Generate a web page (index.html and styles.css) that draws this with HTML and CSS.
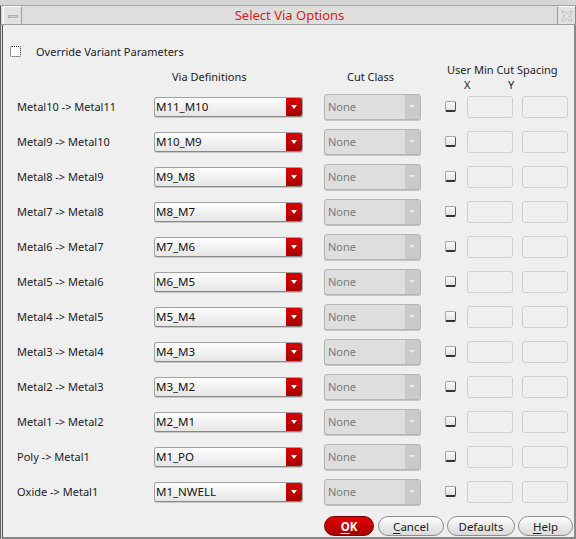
FILE: index.html
```html
<!DOCTYPE html>
<html>
<head>
<meta charset="utf-8">
<link rel="stylesheet" href="styles.css">
</head>
<body>
<div class="window">
  <div class="topstrip"></div>
  <div class="titlebar">
    <div class="tb-btn tb-min"><span class="dash"></span></div>
    <div class="title">Select Via Options</div>
    <div class="tb-btn tb-close">
      <svg width="14" height="14" viewBox="0 0 14 14">
        <path d="M2 2 Q5 2 7 5 Q9 2 12 2 Q12 5 9 7 Q12 9 12 12 Q9 12 7 9 Q5 12 2 12 Q2 9 5 7 Q2 5 2 2 Z" fill="none" stroke="#9a9a9a" stroke-width="1" stroke-dasharray="1 1"/>
      </svg>
    </div>
  </div>
  <div class="content">
    <div class="override">
      <span class="chk focus"></span>
      <span class="override-label">Override Variant Parameters</span>
    </div>
    <div class="grid head">
      <div></div>
      <div class="h-via">Via Definitions</div>
      <div class="h-cut">Cut Class</div>
      <div class="h-spacing">
        <div class="h-user">User Min Cut Spacing</div>
        <div class="h-xy"><span class="h-x">X</span><span class="h-y">Y</span></div>
      </div>
    </div>
    <div class="grid rows">
      <div class="lbl">Metal10 -&gt; Metal11</div>
      <div class="combo"><span class="val">M11_M10</span><span class="arrow"></span></div>
      <div class="ccombo"><span class="val">None</span><span class="carrow"></span></div>
      <span class="chk"></span><span class="field"></span><span class="field"></span>

      <div class="lbl">Metal9 -&gt; Metal10</div>
      <div class="combo"><span class="val">M10_M9</span><span class="arrow"></span></div>
      <div class="ccombo"><span class="val">None</span><span class="carrow"></span></div>
      <span class="chk"></span><span class="field"></span><span class="field"></span>

      <div class="lbl">Metal8 -&gt; Metal9</div>
      <div class="combo"><span class="val">M9_M8</span><span class="arrow"></span></div>
      <div class="ccombo"><span class="val">None</span><span class="carrow"></span></div>
      <span class="chk"></span><span class="field"></span><span class="field"></span>

      <div class="lbl">Metal7 -&gt; Metal8</div>
      <div class="combo"><span class="val">M8_M7</span><span class="arrow"></span></div>
      <div class="ccombo"><span class="val">None</span><span class="carrow"></span></div>
      <span class="chk"></span><span class="field"></span><span class="field"></span>

      <div class="lbl">Metal6 -&gt; Metal7</div>
      <div class="combo"><span class="val">M7_M6</span><span class="arrow"></span></div>
      <div class="ccombo"><span class="val">None</span><span class="carrow"></span></div>
      <span class="chk"></span><span class="field"></span><span class="field"></span>

      <div class="lbl">Metal5 -&gt; Metal6</div>
      <div class="combo"><span class="val">M6_M5</span><span class="arrow"></span></div>
      <div class="ccombo"><span class="val">None</span><span class="carrow"></span></div>
      <span class="chk"></span><span class="field"></span><span class="field"></span>

      <div class="lbl">Metal4 -&gt; Metal5</div>
      <div class="combo"><span class="val">M5_M4</span><span class="arrow"></span></div>
      <div class="ccombo"><span class="val">None</span><span class="carrow"></span></div>
      <span class="chk"></span><span class="field"></span><span class="field"></span>

      <div class="lbl">Metal3 -&gt; Metal4</div>
      <div class="combo"><span class="val">M4_M3</span><span class="arrow"></span></div>
      <div class="ccombo"><span class="val">None</span><span class="carrow"></span></div>
      <span class="chk"></span><span class="field"></span><span class="field"></span>

      <div class="lbl">Metal2 -&gt; Metal3</div>
      <div class="combo"><span class="val">M3_M2</span><span class="arrow"></span></div>
      <div class="ccombo"><span class="val">None</span><span class="carrow"></span></div>
      <span class="chk"></span><span class="field"></span><span class="field"></span>

      <div class="lbl">Metal1 -&gt; Metal2</div>
      <div class="combo"><span class="val">M2_M1</span><span class="arrow"></span></div>
      <div class="ccombo"><span class="val">None</span><span class="carrow"></span></div>
      <span class="chk"></span><span class="field"></span><span class="field"></span>

      <div class="lbl">Poly -&gt; Metal1</div>
      <div class="combo"><span class="val">M1_PO</span><span class="arrow"></span></div>
      <div class="ccombo"><span class="val">None</span><span class="carrow"></span></div>
      <span class="chk"></span><span class="field"></span><span class="field"></span>

      <div class="lbl">Oxide -&gt; Metal1</div>
      <div class="combo"><span class="val">M1_NWELL</span><span class="arrow"></span></div>
      <div class="ccombo"><span class="val">None</span><span class="carrow"></span></div>
      <span class="chk"></span><span class="field"></span><span class="field"></span>
    </div>
    <div class="buttons">
      <button class="btn ok"><u>O</u>K</button>
      <button class="btn cancel"><u>C</u>ancel</button>
      <button class="btn defaults">Defaults</button>
      <button class="btn help"><u>H</u>elp</button>
    </div>
  </div>
</div>
</body>
</html>
```

FILE: styles.css
```css
* { box-sizing: border-box; }
html, body { margin: 0; padding: 0; }
body {
  width: 576px;
  height: 539px;
  background: #d8d8d8;
  font-family: "Noto Sans", "DejaVu Sans", sans-serif;
  font-size: 11px;
  color: #222;
  overflow: hidden;
}
.window {
  width: 576px;
  height: 539px;
  display: flex;
  flex-direction: column;
}
.topstrip {
  height: 6px;
  background: #d6d6d6;
  border-bottom: 1px solid #a4a4a4;
  flex: none;
}
.titlebar {
  height: 19px;
  flex: none;
  display: flex;
  align-items: stretch;
  background: #dedede;
  border-bottom: 1px solid #9c9c9c;
  border-left: 1px solid #555;
  border-right: 1px solid #888;
}
.tb-btn {
  width: 19px;
  flex: none;
  display: flex;
  align-items: center;
  justify-content: center;
  background: #e2e2e2;
  border-top: 1px solid #fff;
  border-left: 1px solid #fff;
}
.tb-min { margin-left: 2px; border-right: 1px solid #999; }
.tb-close { border-left: 1px solid #999; width: 18px; }
.dash {
  width: 10px;
  height: 3px;
  background: #d0d0d0;
  border: 1px solid #b0b0b0;
  margin-top: 1px;
}
.title {
  flex: 1;
  text-align: center;
  color: #d41c1c;
  font-size: 13px;
  line-height: 18px;
}
.content {
  flex: 1;
  background: #efefef;
  border-left: 1px solid #555;
  margin-left: 2px;
  box-shadow: -1px 0 0 #dcdcdc, -2px 0 0 #666;
  border-right: 2px solid #8a8a8a;
  border-bottom: 2px solid #8a8a8a;
  padding-top: 16px;
  padding-left: 7px;
  display: flex;
  flex-direction: column;
}
.override {
  height: 20px;
  display: flex;
  align-items: center;
}
.override-label { margin-left: 15px; }
.chk {
  width: 11px;
  height: 11px;
  display: inline-block;
  border: 1px solid #a8a8a8;
  border-right-color: #555;
  border-bottom: 2px solid #333;
  border-radius: 2px;
  background: linear-gradient(#fbfbfb, #e2e2e2);
}
.chk.focus {
  border: 1px dotted #222;
  background: #fafafa;
  margin-top: 1px;
}
.grid {
  display: grid;
  grid-template-columns: 137px 170px 121px 22px 55px 46px;
  padding-left: 7px;
}
.head {
  height: 28px;
}
.h-via { padding-left: 18px; padding-top: 8px; line-height: 15px; }
.h-cut { padding-left: 23px; padding-top: 8px; line-height: 15px; }
.h-spacing { grid-column: 4 / span 3; padding-left: 2px; }
.h-user { line-height: 15px; padding-top: 1px; }
.h-xy { line-height: 14px; position: relative; height: 14px; margin-top: 1px; }
.h-x { position: absolute; left: 17px; }
.h-y { position: absolute; left: 61px; }
.rows {
  grid-auto-rows: 35px;
  align-items: center;
}
.lbl { white-space: nowrap; }
.combo {
  width: 149px;
  height: 20px;
  border: 1px solid #a2a2a2;
  border-bottom-color: #888;
  border-radius: 3px;
  background: linear-gradient(#fdfdfd, #e6e6e6);
  display: flex;
  align-items: center;
  overflow: hidden;
  box-shadow: 0 1px 0 #c8c8c8;
}
.combo .val { flex: 1; padding-left: 1px; color: #111; font-size: 11.5px; }
.arrow {
  width: 16px;
  height: 100%;
  background: linear-gradient(#d90000, #a80000);
  position: relative;
  flex: none;
}
.arrow::after {
  content: "";
  position: absolute;
  left: 5px;
  top: 7px;
  border-left: 3px solid transparent;
  border-right: 3px solid transparent;
  border-top: 4px solid #fff;
}
.ccombo {
  width: 97px;
  height: 26px;
  border: 1px solid #b4b4b4;
  border-radius: 3px;
  background: #dedede;
  display: flex;
  align-items: center;
  overflow: hidden;
  box-shadow: 0 1px 0 #c4c4c4;
}
.ccombo .val { flex: 1; padding-left: 3px; color: #7a7a7a; }
.carrow {
  width: 15px;
  height: 100%;
  background: #c9c9c9;
  position: relative;
  flex: none;
}
.carrow::after {
  content: "";
  position: absolute;
  left: 4px;
  top: 10px;
  border-left: 3px solid transparent;
  border-right: 3px solid transparent;
  border-top: 3px solid #ececec;
}
.field {
  width: 46px;
  height: 22px;
  border: 1px solid #cfcfcf;
  border-radius: 3px;
  background: #efefef;
  display: block;
}
.buttons {
  margin-top: 7px;
  display: flex;
  justify-content: flex-end;
  gap: 3px;
  padding-right: 1px;
}
.btn {
  font-family: "Noto Sans", "DejaVu Sans", sans-serif;
  font-size: 11.5px;
  height: 20px;
  padding: 0;
  border: 1px solid #8c8c8c;
  border-radius: 10px;
  background: linear-gradient(#fcfcfc, #dadada);
  color: #222;
  line-height: 17px;
}
.btn u { text-underline-offset: 2px; }
.ok {
  width: 50px;
  margin-right: 1px;
  background: linear-gradient(#e60000, #a40000);
  border-color: #7a0000;
  color: #fff;
  font-weight: bold;
}
.cancel { width: 66px; }
.defaults { width: 68px; }
.help { width: 55px; }
```
